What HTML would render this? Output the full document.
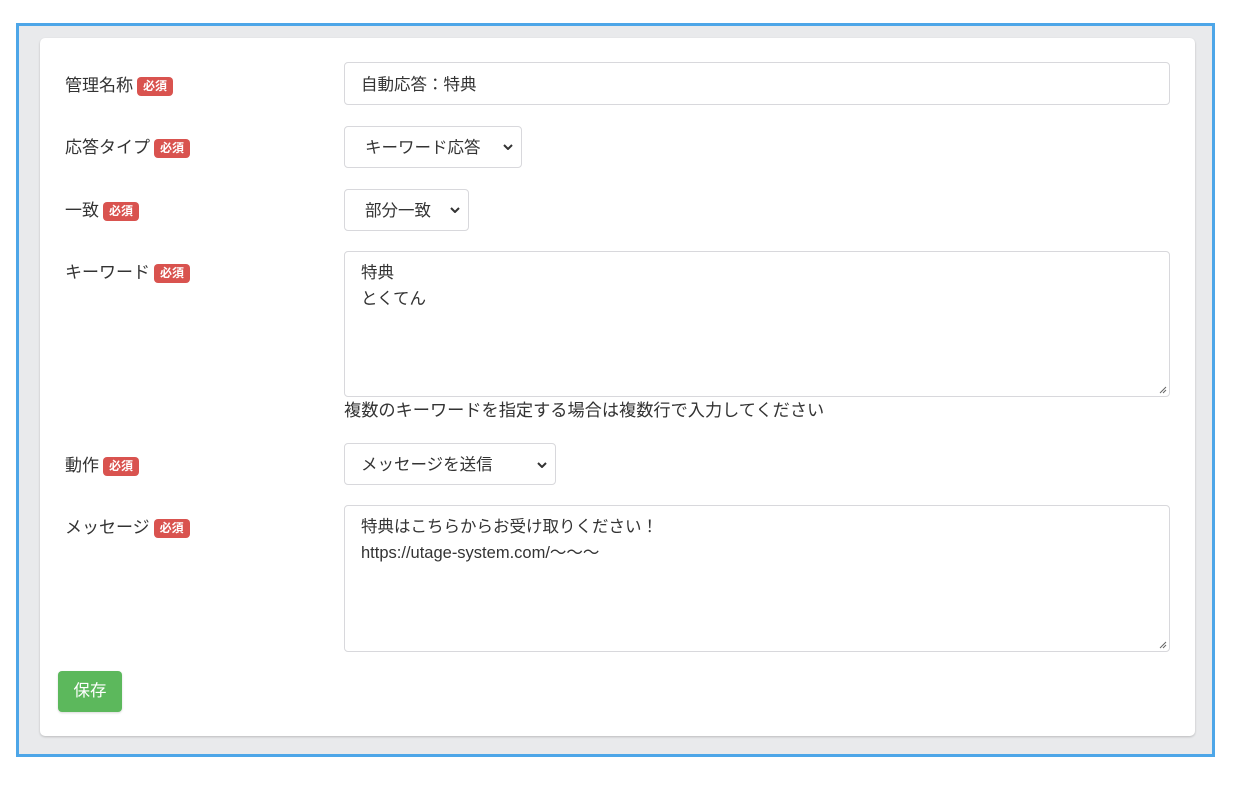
<!DOCTYPE html>
<html><head><meta charset="utf-8"><style>
body{margin:0;width:1234px;height:786px;background:#fff;position:relative;font-family:"Liberation Sans","Noto Sans CJK JP",sans-serif;color:#333;font-size:17px;overflow:hidden}
.frame{position:absolute;left:16px;top:23px;width:1193px;height:728px;border:3px solid #4da6e8;background:#e9eaec}
.card{position:absolute;left:40px;top:38px;width:1155px;height:698px;background:#fff;border-radius:5px;box-shadow:0 1px 2px rgba(0,0,0,.2)}
.lbl{position:absolute;left:65px;font-size:17px;line-height:22px}
.b{display:inline-block;background:#d9534f;color:#fff;font-size:12px;font-weight:bold;line-height:19px;padding:0 6px;border-radius:4px;vertical-align:1px;margin-left:4px}
.in{position:absolute;left:344px;border:1px solid #d8d8dc;border-radius:4px;background:#fff;box-sizing:border-box;padding:0 16px;line-height:22px;font-size:16.5px}
.sel{padding-left:20px}
.sel svg{position:absolute;right:8px;top:50%;margin-top:-3px}
.ta{padding-top:8px;line-height:26px}
.grip{position:absolute;right:2px;bottom:2px}
</style></head><body>
<div class="frame"></div>
<div class="card"></div>
<div class="lbl" style="top:75px">管理名称<span class="b">必須</span></div>
<div class="in" style="top:62px;width:826px;height:43px;padding-top:11px">自動応答：特典</div>
<div class="lbl" style="top:137px">応答タイプ<span class="b">必須</span></div>
<div class="in sel" style="top:126px;width:178px;height:42px;padding-top:10px">キーワード応答<svg width="10" height="6" viewBox="0 0 10 6"><path d="M1 1l4 4 4-4" stroke="#333" stroke-width="2" fill="none"/></svg></div>
<div class="lbl" style="top:200px">一致<span class="b">必須</span></div>
<div class="in sel" style="top:189px;width:125px;height:42px;padding-top:10px">部分一致<svg width="10" height="6" viewBox="0 0 10 6"><path d="M1 1l4 4 4-4" stroke="#333" stroke-width="2" fill="none"/></svg></div>
<div class="lbl" style="top:262px">キーワード<span class="b">必須</span></div>
<div class="in ta" style="top:251px;width:826px;height:146px">特典<br>とくてん<svg class="grip" width="9" height="9"><path d="M8 2L2 8M8 5L5 8" stroke="#666" stroke-width="1"/></svg></div>
<div style="position:absolute;left:344px;top:399px;line-height:22px;font-size:17.2px">複数のキーワードを指定する場合は複数行で入力してください</div>
<div class="lbl" style="top:455px">動作<span class="b">必須</span></div>
<div class="in" style="top:443px;width:212px;height:42px;padding-top:10px">メッセージを送信<svg width="10" height="6" viewBox="0 0 10 6" style="position:absolute;right:8px;top:18px"><path d="M1 1l4 4 4-4" stroke="#333" stroke-width="2" fill="none"/></svg></div>
<div class="lbl" style="top:517px">メッセージ<span class="b">必須</span></div>
<div class="in ta" style="top:505px;width:826px;height:147px">特典はこちらからお受け取りください！<br>https://utage-system.com/〜〜〜<svg class="grip" width="9" height="9"><path d="M8 2L2 8M8 5L5 8" stroke="#666" stroke-width="1"/></svg></div>
<div style="position:absolute;left:58px;top:671px;width:64px;height:41px;background:#5cb85c;border-radius:4px;color:#fff;text-align:center;line-height:41px;font-size:16.5px;box-shadow:0 1px 2px rgba(0,0,0,.15)">保存</div>
</body></html>
